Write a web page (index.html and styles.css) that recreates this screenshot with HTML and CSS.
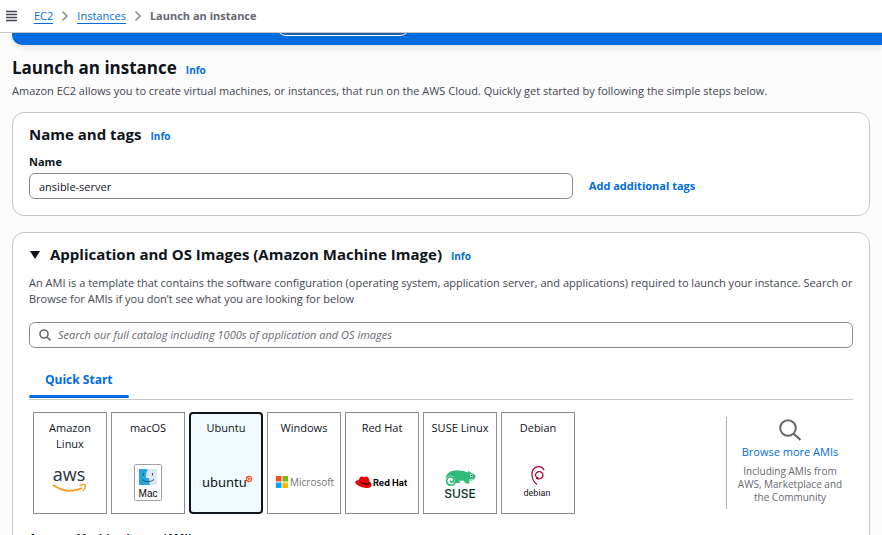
FILE: index.html
```html
<!DOCTYPE html>
<html lang="en">
<head>
<meta charset="utf-8">
<title>Launch an instance | EC2</title>
<link rel="stylesheet" href="styles.css">
</head>
<body>
<header class="topbar">
  <button class="menu" type="button" aria-label="Open navigation">
    <svg width="12" height="12" viewBox="0 0 12 12"><path d="M0 1.500h11M0 4.500h11M0 7.500h11M0 10.500h11" stroke="#424650" stroke-width="1.400"/></svg>
  </button>
  <nav class="crumbs" aria-label="Breadcrumbs">
    <a href="#ec2">EC2</a>
    <svg width="8" height="12" viewBox="0 0 8 12"><path d="M1.500 1.500L6 6l-4.500 4.500" fill="none" stroke="#8c8c94" stroke-width="1.600"/></svg>
    <a href="#instances">Instances</a>
    <svg width="8" height="12" viewBox="0 0 8 12"><path d="M1.500 1.500L6 6l-4.500 4.500" fill="none" stroke="#8c8c94" stroke-width="1.600"/></svg>
    <span class="current">Launch an instance</span>
  </nav>
</header>
<main class="content">
  <div class="flash"><button class="flash-action" type="button" aria-label="Open walkthrough"></button></div>
  <div class="page-head">
    <h1>Launch an instance</h1><a class="info" href="#info">Info</a>
  </div>
  <p class="lead">Amazon EC2 allows you to create virtual machines, or instances, that run on the AWS Cloud. Quickly get started by following the simple steps below.</p>

  <section class="card name-card">
    <div class="card-head"><h2>Name and tags</h2><a class="info" href="#info-name">Info</a></div>
    <label class="label" for="name">Name</label>
    <div class="name-row">
      <input class="field" id="name" type="text" value="ansible-server">
      <a class="add-tags" href="#tags">Add additional tags</a>
    </div>
  </section>

  <section class="card ami-card">
    <div class="card-head">
      <button class="toggle" type="button" aria-label="Collapse section"><svg width="12" height="10" viewBox="0 0 12 10"><path d="M1 1h10L6 9z" fill="#0f141a"/></svg></button>
      <h2>Application and OS Images (Amazon Machine Image)</h2><a class="info" href="#info-ami">Info</a>
    </div>
    <p class="desc">An AMI is a template that contains the software configuration (operating system, application server, and applications) required to launch your instance. Search or Browse for AMIs if you don’t see what you are looking for below</p>
    <div class="search">
      <svg width="12" height="12" viewBox="0 0 12 12"><circle cx="5" cy="5" r="4" fill="none" stroke="#656871" stroke-width="1.600"/><path d="M8 8l3.500 3.500" stroke="#656871" stroke-width="1.600"/></svg>
      <input type="search" aria-label="Search AMIs" placeholder="Search our full catalog including 1000s of application and OS images">
    </div>
    <div class="tabs"><button class="tab" type="button">Quick Start</button></div>
    <div class="quick">
      <div class="tiles">
        <button class="tile" type="button"><span class="os">Amazon Linux</span>
          <svg class="logo" width="64" height="40" viewBox="0 0 64 40"><text x="31" y="19" text-anchor="middle" class="t-aws">aws</text><path d="M15 23Q30 33 44 26" fill="none" stroke="#f7981f" stroke-width="1.600"/><path d="M41.500 23.300q6.500-1.500 6 .5-.3 2.800-2.500 5" fill="none" stroke="#f7981f" stroke-width="1.300"/></svg>
        </button>
        <button class="tile" type="button"><span class="os">macOS</span>
          <svg class="logo" width="64" height="40" viewBox="0 0 64 40"><rect x="18.500" y="2.500" width="27" height="36" rx="1" fill="#fff" stroke="#a0a0a0"/><path d="M23 7h9q-2 4-2 9h3l1 7H23z" fill="#27a5df"/><path d="M32 7h9v16h-7l-1-7h-3q0-5 2-9z" fill="#dfe8f1"/><path d="M27.500 11v2.500M36.500 11v2.500M26 17.500q6 4.500 12 0" fill="none" stroke="#1d4568" stroke-width=".9"/><text x="32" y="35" text-anchor="middle" class="t-mac">Mac</text></svg>
        </button>
        <button class="tile selected" type="button" aria-pressed="true"><span class="os">Ubuntu</span>
          <svg class="logo" width="64" height="40" viewBox="0 0 64 40"><text x="8" y="25" class="t-ubuntu">ubuntu</text><circle cx="55" cy="17" r="3.200" fill="#e95420"/><circle cx="55" cy="17" r="1.500" fill="none" stroke="#fff" stroke-width=".6"/><g fill="#fff"><circle cx="53.200" cy="17" r=".6"/><circle cx="56" cy="15.400" r=".6"/><circle cx="56" cy="18.600" r=".6"/></g></svg>
        </button>
        <button class="tile" type="button"><span class="os">Windows</span>
          <svg class="logo" width="64" height="40" viewBox="0 0 64 40"><path d="M4 14h5.500v5.500H4z" fill="#f25022"/><path d="M10.500 14H16v5.500h-5.500z" fill="#7fba00"/><path d="M4 20.500h5.500V26H4z" fill="#00a4ef"/><path d="M10.500 20.500H16V26h-5.500z" fill="#ffb900"/><text x="18" y="24" class="t-ms">Microsoft</text></svg>
        </button>
        <button class="tile" type="button"><span class="os">Red Hat</span>
          <svg class="logo" width="64" height="40" viewBox="0 0 64 40"><path d="M10 15.500q1-1.500 3-.7 1 .4 2.500-.1 2.500-.8 3.500 2.200l.7 3q1.800.8 1.800 3 0 3.500-5.500 3-5.500-.5-9.500-3.500-1.800-1.800-1-3.200.8-1 3-1z" fill="#e00"/><path d="M9.500 18.500q0 1.800 4 3 4 1.300 5.800.5 1-.5.500-2" fill="none" stroke="#000" stroke-width=".9"/><text x="23" y="24" class="t-rh">Red Hat</text></svg>
        </button>
        <button class="tile" type="button"><span class="os">SUSE Linux</span>
          <svg class="logo" width="64" height="40" viewBox="0 0 64 40"><path d="M17.500 16C19 10.500 23 8.500 28 8.500q7-.5 12 2l.5-2 2.500 2.500q4.500.5 4.500 4-.5 3.500-5 3.500h-2l1.500 3h-4l-2.500-3-4.500.3 1.500 2.200h-5l-1-5q-4-5-8.500 0z" fill="#30ba78"/><path d="M27.500 19c-.3 3-2.200 4.500-5 4.200-3.800-.4-5.200-4.700-2.700-7.200 2.700-2.500 6.800-.5 6 2.500-.6 2.200-3.600 2-3.600 0" fill="none" stroke="#30ba78" stroke-width="1.700"/><circle cx="43.500" cy="13.500" r="1.500" fill="#fff"/><circle cx="43.700" cy="13.500" r=".8" fill="#0c322c"/><path d="M41.500 17.500q3 .5 5.500-1" fill="none" stroke="#fff" stroke-width=".6"/><text x="32" y="36" text-anchor="middle" class="t-suse">SUSE</text></svg>
        </button>
        <button class="tile" type="button"><span class="os">Debian</span>
          <svg class="logo" width="64" height="40" viewBox="0 0 64 40"><path d="M32.500 15.500c-3 .3-4-3-1.800-5 2.300-1.900 6.300-.5 6.300 2.500 0 3.500-4.500 5-7 3" fill="none" stroke="#a80030" stroke-width="1.200"/><path d="M38 8c-1.500-4-7-4.500-10-1.500-3.500 4-2.500 12 3 16" fill="none" stroke="#a80030" stroke-width="1.200"/><text x="31" y="34" text-anchor="middle" class="t-deb">debian</text></svg>
        </button>
      </div>
      <div class="more">
        <svg width="24" height="24" viewBox="0 0 24 24"><circle cx="10" cy="10" r="7.800" fill="none" stroke="#656871" stroke-width="2"/><path d="M15.500 15.500l7 6.500" stroke="#656871" stroke-width="2.200"/></svg>
        <a href="#browse">Browse more AMIs</a>
        <p>Including AMIs from AWS, Marketplace and the Community</p>
      </div>
    </div>
    <h3 class="label">Amazon Machine Image (AMI)</h3>
  </section>
</main>
</body>
</html>
```
FILE: styles.css
```css
* { box-sizing: border-box; }
body {
  margin: 0;
  height: 100vh;
  overflow: hidden;
  display: flex;
  flex-direction: column;
  background: #fcfcfd;
  color: #0f141a;
  font: 11px/16px "Open Sans", "Noto Sans", sans-serif;
}
h1, h2, h3, p { margin: 0; }
button, input { font: inherit; color: inherit; }
button { padding: 0; border: 0; background: none; }
a { color: #006ce0; text-decoration: none; }
svg { display: block; flex: none; }

.topbar {
  flex: none;
  display: flex;
  align-items: center;
  gap: 16px;
  height: 33px;
  padding: 0 6px;
  background: #fff;
  border-bottom: 1px solid #c6c6cd;
}
.crumbs { display: flex; align-items: center; gap: 8px; }
.crumbs a { line-height: 14px; border-bottom: 1px solid #006ce0; }
.current { font-weight: 700; color: #656871; }

.content { flex: 1; min-height: 0; overflow: hidden; padding-left: 12px; }
.flash {
  height: 12px;
  overflow: hidden;
  background: #006ce0;
  border-bottom-left-radius: 10px;
  box-shadow: 0 2px 6px #0f141a22;
}
.flash-action {
  display: block;
  width: 134px;
  height: 26px;
  margin: -23px 0 0 264px;
  border: 1px solid #fff;
  border-radius: 10px;
  background: #1a5fb0;
}
.page-head, .card-head { display: flex; align-items: baseline; gap: 9px; }
.page-head { margin-top: 11px; }
h1 { font-size: 17px; line-height: 24px; font-weight: 700; }
h2 { font-size: 15px; line-height: 20px; font-weight: 700; }
.info { font-size: 10px; font-weight: 700; }
.lead { margin-top: 3px; color: #424650; }

.card {
  margin: 13px 12px 0 0;
  padding: 11px 16px 16px;
  background: #fff;
  border: 1px solid #c6c6cd;
  border-radius: 12px;
}
.label { display: block; font-size: 11px; line-height: 16px; font-weight: 700; }
.name-card .label { margin-top: 10px; }
.name-row { display: flex; align-items: center; gap: 16px; margin-top: 3px; }
.field {
  flex: 0 1 66%;
  min-width: 0;
  height: 26px;
  padding: 0 9px;
  border: 1px solid #8c8c94;
  border-radius: 6px;
  background: #fff;
}
.add-tags { font-weight: 700; }

.ami-card { margin-top: 16px; }
.desc { margin-top: 11px; color: #424650; }
.search {
  display: flex;
  align-items: center;
  gap: 7px;
  height: 26px;
  margin-top: 15px;
  padding: 0 9px;
  border: 1px solid #8c8c94;
  border-radius: 6px;
}
.search input { flex: 1; min-width: 0; padding: 0; border: 0; outline: 0; background: none; }
.search input::placeholder { color: #656871; font-style: italic; opacity: 1; }
.tabs { margin-top: 18px; border-bottom: 1px solid #c6c6cd; }
.tab {
  display: block;
  height: 32px;
  padding: 0 16px 4px;
  margin-bottom: 1px;
  position: relative;
  color: #006ce0;
  font-size: 12px;
  font-weight: 700;
}
.tab::after {
  content: "";
  position: absolute;
  left: 0;
  right: 0;
  bottom: 0;
  height: 3px;
  border-radius: 2px;
  background: #006ce0;
}
.quick { display: flex; justify-content: space-between; padding: 12px 0 0 4px; }
.tiles { display: flex; gap: 4px; }
.tile {
  display: flex;
  flex-direction: column;
  align-items: center;
  justify-content: space-between;
  width: 74px;
  height: 102px;
  padding: 7px 4px 11px;
  border: 1px solid #8c8c94;
}
.os { padding: 0 8px; }
.tile:nth-child(6) .os { padding: 0; }
.tile.selected { padding: 6px 3px 10px; border: 2px solid #0f141a; border-radius: 4px; background: #f0fbff; }
.more {
  display: flex;
  flex-direction: column;
  align-items: center;
  width: 127px;
  height: 92px;
  margin-top: 5px;
  padding: 1px 8px 0;
  border-left: 1px solid #b4b4bb;
  text-align: center;
}
.more a { margin-top: 2px; }
.more p { margin-top: 5px; font-size: 10px; line-height: 13px; color: #656871; }
h3.label { margin-top: 16px; }

.t-aws { font: 500 18px "Open Sans", sans-serif; fill: #252f3e; }
.t-mac { font: 10px "Liberation Sans", sans-serif; }
.t-ubuntu { font: 13px "Noto Sans", sans-serif; fill: #111; }
.t-ms { font: 500 10px "Open Sans", sans-serif; fill: #737373; }
.t-rh { font: 700 9px Inter, sans-serif; }
.t-suse { font: 500 12px Inter, sans-serif; fill: #0c322c; }
.t-deb { font: 9px Roboto, sans-serif; fill: #111; }
```
